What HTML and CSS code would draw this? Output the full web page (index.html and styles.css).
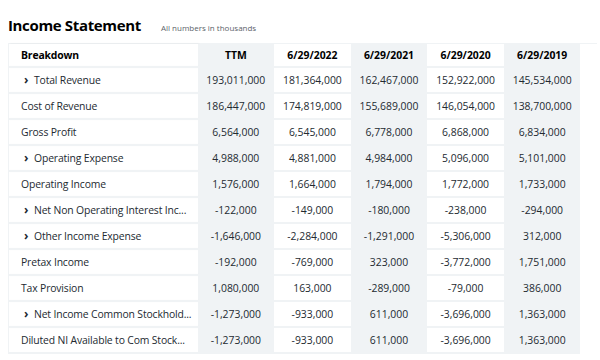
FILE: index.html
```html
<!DOCTYPE html>
<html>
<head>
<meta charset="utf-8">
<link rel="stylesheet" href="styles.css">
</head>
<body>
<div class="head">
  <h1 class="title">Income Statement</h1>
  <span class="note">All numbers in thousands</span>
</div>
<div class="wrap">
<table class="fin">
  <colgroup>
    <col class="c-label"><col class="c-num"><col class="c-num"><col class="c-num"><col class="c-num"><col class="c-num">
  </colgroup>
  <thead>
    <tr><th class="label">Breakdown</th><th class="alt">TTM</th><th>6/29/2022</th><th class="alt">6/29/2021</th><th>6/29/2020</th><th class="alt">6/29/2019</th></tr>
  </thead>
  <tbody>
    <tr><td class="label exp"><span class="chev">›</span>Total Revenue</td><td class="alt">193,011,000</td><td>181,364,000</td><td class="alt">162,467,000</td><td>152,922,000</td><td class="alt">145,534,000</td></tr>
    <tr><td class="label">Cost of Revenue</td><td class="alt">186,447,000</td><td>174,819,000</td><td class="alt">155,689,000</td><td>146,054,000</td><td class="alt">138,700,000</td></tr>
    <tr><td class="label">Gross Profit</td><td class="alt">6,564,000</td><td>6,545,000</td><td class="alt">6,778,000</td><td>6,868,000</td><td class="alt">6,834,000</td></tr>
    <tr><td class="label exp"><span class="chev">›</span>Operating Expense</td><td class="alt">4,988,000</td><td>4,881,000</td><td class="alt">4,984,000</td><td>5,096,000</td><td class="alt">5,101,000</td></tr>
    <tr><td class="label">Operating Income</td><td class="alt">1,576,000</td><td>1,664,000</td><td class="alt">1,794,000</td><td>1,772,000</td><td class="alt">1,733,000</td></tr>
    <tr><td class="label exp"><span class="chev">›</span>Net Non Operating Interest Inc...</td><td class="alt">-122,000</td><td>-149,000</td><td class="alt">-180,000</td><td>-238,000</td><td class="alt">-294,000</td></tr>
    <tr><td class="label exp"><span class="chev">›</span>Other Income Expense</td><td class="alt">-1,646,000</td><td>-2,284,000</td><td class="alt">-1,291,000</td><td>-5,306,000</td><td class="alt">312,000</td></tr>
    <tr><td class="label">Pretax Income</td><td class="alt">-192,000</td><td>-769,000</td><td class="alt">323,000</td><td>-3,772,000</td><td class="alt">1,751,000</td></tr>
    <tr><td class="label">Tax Provision</td><td class="alt">1,080,000</td><td>163,000</td><td class="alt">-289,000</td><td>-79,000</td><td class="alt">386,000</td></tr>
    <tr><td class="label exp"><span class="chev">›</span>Net Income Common Stockhold...</td><td class="alt">-1,273,000</td><td>-933,000</td><td class="alt">611,000</td><td>-3,696,000</td><td class="alt">1,363,000</td></tr>
    <tr><td class="label">Diluted NI Available to Com Stock...</td><td class="alt">-1,273,000</td><td>-933,000</td><td class="alt">611,000</td><td>-3,696,000</td><td class="alt">1,363,000</td></tr>
  </tbody>
</table>
</div>
</body>
</html>
```
FILE: styles.css
```css
html, body { margin: 0; padding: 0; background: #fff; }
body {
  padding: 0 0 0 8px;
  font-family: "Open Sans", "DejaVu Sans", sans-serif;
  color: #232a31;
}
.head {
  display: flex;
  align-items: baseline;
  height: 43px;
  box-sizing: border-box;
  padding-top: 15px;
}
.title {
  margin: 0;
  font-size: 15px;
  font-weight: 700;
  letter-spacing: -0.35px;
  color: #000;
}
.note {
  margin-left: 20px;
  font-size: 8px;
  color: #5b636a;
}
.wrap {
  width: 589px;
  border-top: 1px solid #f0f3f5;
}
.fin {
  border-collapse: collapse;
  table-layout: fixed;
  width: 572px;
  font-size: 10.4px;
}
.c-label { width: 189px; }
.c-num { width: 76.6px; }
.fin th, .fin td {
  padding: 0;
  text-align: center;
  border-bottom: 2px solid #f0f3f5;
  white-space: nowrap;
}
.fin th { height: 22px; font-weight: 700; color: #000; }
.fin td { height: 24px; }
.fin .label {
  text-align: left;
  padding-left: 12px;
  border-left: 1px solid #f0f3f5;
  box-shadow: 1px 0 2px rgba(0,0,0,0.08);
  letter-spacing: -0.15px;
}
.fin td.exp { padding-left: 15px; }
.chev {
  display: inline-block;
  width: 10px;
  font-weight: 700;
  font-size: 12px;
  line-height: 10px;
}
.fin .alt { background: #f0f3f5; }
```
